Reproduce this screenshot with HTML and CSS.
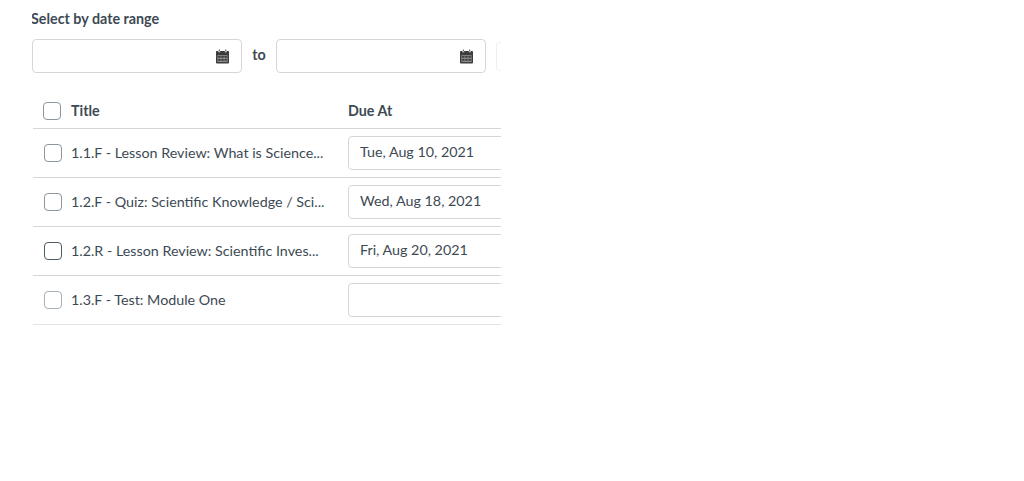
FILE: index.html
```html
<!DOCTYPE html>
<html lang="en">
<head>
  <meta charset="UTF-8" />
  <meta name="viewport" content="width=device-width, initial-scale=1.0"/>
  <title>Select by date range</title>
  <link rel="stylesheet" href="styles.css">
</head>
<body>
  <div class="panel">
    <!-- Date range -->
    <div class="range-label">Select by date range</div>
    <div class="range-row">
      <div class="date-field">
        <svg class="cal" viewBox="0 0 14 15"><path fill="#3c3c3c" fill-rule="evenodd" d="M3 0h1v2H3zM10 0h1v2h-1zM1 1.500h1.500V3h2V1.500h5V3h2V1.500H13a1 1 0 0 1 1 1V14a1 1 0 0 1-1 1H1a1 1 0 0 1-1-1V2.500a1 1 0 0 1 1-1z"/><path fill="#8c8c8c" d="M1.500 6h11v7.500h-11z"/><path fill="#3c3c3c" d="M2.300 7h2.600v1.900H2.300zM5.700 7h2.600v1.900H5.700zM9.100 7h2.600v1.900H9.100zM2.300 10.200h2.600v1.900H2.300zM5.700 10.200h2.600v1.900H5.700zM9.100 10.200h2.600v1.900H9.100z"/></svg>
      </div>
      <span class="to">to</span>
      <div class="date-field">
        <svg class="cal" viewBox="0 0 14 15"><path fill="#3c3c3c" fill-rule="evenodd" d="M3 0h1v2H3zM10 0h1v2h-1zM1 1.500h1.500V3h2V1.500h5V3h2V1.500H13a1 1 0 0 1 1 1V14a1 1 0 0 1-1 1H1a1 1 0 0 1-1-1V2.500a1 1 0 0 1 1-1z"/><path fill="#8c8c8c" d="M1.500 6h11v7.500h-11z"/><path fill="#3c3c3c" d="M2.300 7h2.600v1.900H2.300zM5.700 7h2.600v1.900H5.700zM9.100 7h2.600v1.900H9.100zM2.300 10.200h2.600v1.900H2.300zM5.700 10.200h2.600v1.900H5.700zM9.100 10.200h2.600v1.900H9.100z"/></svg>
      </div>
      <div class="clear-btn"></div>
    </div>

    <!-- Assignments -->
    <div class="table">
      <div class="row head">
        <span class="check"></span>
        <span class="title">Title</span>
        <span class="due">Due At</span>
      </div>
      <div class="row">
        <span class="check"></span>
        <span class="title">1.1.F - Lesson Review: What is Science...</span>
        <div class="due-input">Tue, Aug 10, 2021</div>
      </div>
      <div class="row">
        <span class="check"></span>
        <span class="title">1.2.F - Quiz: Scientific Knowledge / Sci...</span>
        <div class="due-input">Wed, Aug 18, 2021</div>
      </div>
      <div class="row">
        <span class="check dark"></span>
        <span class="title">1.2.R - Lesson Review: Scientific Inves...</span>
        <div class="due-input">Fri, Aug 20, 2021</div>
      </div>
      <div class="row last">
        <span class="check light"></span>
        <span class="title">1.3.F - Test: Module One</span>
        <div class="due-input"></div>
      </div>
    </div>
  </div>
</body>
</html>
```

FILE: styles.css
```css
* {
  box-sizing: border-box;
}

body {
  margin: 0;
  font-family: Lato, "Open Sans", sans-serif;
  font-size: 14.3px;
  background-color: #fff;
  color: #3d4a54;
}

.panel {
  width: 469px;
  margin-left: 32px;
  padding-top: 10px;
  overflow: hidden;
}

.range-label {
  margin-left: -1px;
  height: 18px;
  line-height: 17px;
  font-weight: 700;
}

.range-row {
  display: flex;
  align-items: center;
  margin-top: 11px;
}

.date-field {
  width: 210px;
  height: 34px;
  flex-shrink: 0;
  border: 1px solid #d3d7da;
  border-radius: 4px;
  display: flex;
  align-items: center;
  justify-content: flex-end;
  padding-right: 12px;
}

.cal {
  width: 13px;
  height: 15px;
}

.to {
  width: 34px;
  flex-shrink: 0;
  padding-bottom: 3px;
  text-align: center;
  font-weight: 700;
}

.clear-btn {
  width: 40px;
  height: 29px;
  flex-shrink: 0;
  margin-left: 10px;
  border: 1px solid #eceef0;
  border-radius: 4px;
}

.table {
  margin-top: 21px;
  margin-left: 1px;
}

.row {
  display: flex;
  align-items: center;
  height: 49px;
  padding-left: 11px;
  border-bottom: 1px solid #d3d7da;
  white-space: nowrap;
}

.row.head {
  height: 35px;
  padding-left: 10px;
  font-weight: 700;
}

.row.last {
  border-bottom-color: #e2e5e7;
}

.check {
  width: 18px;
  height: 18px;
  flex-shrink: 0;
  border: 1px solid #8b969e;
  border-radius: 4px;
}

.check.dark {
  border-color: #4f5b64;
}

.check.light {
  border-color: #a8b1b7;
}

.title {
  width: 277px;
  flex-shrink: 0;
  margin-left: 9px;
  padding-bottom: 2px;
}

.head .title {
  margin-left: 10px;
  padding-bottom: 1px;
}

.due {
  flex-shrink: 0;
  padding-bottom: 1px;
}

.due-input {
  width: 160px;
  height: 34px;
  flex-shrink: 0;
  line-height: 30px;
  padding-left: 11px;
  border: 1px solid #d3d7da;
  border-radius: 4px;
}
```
